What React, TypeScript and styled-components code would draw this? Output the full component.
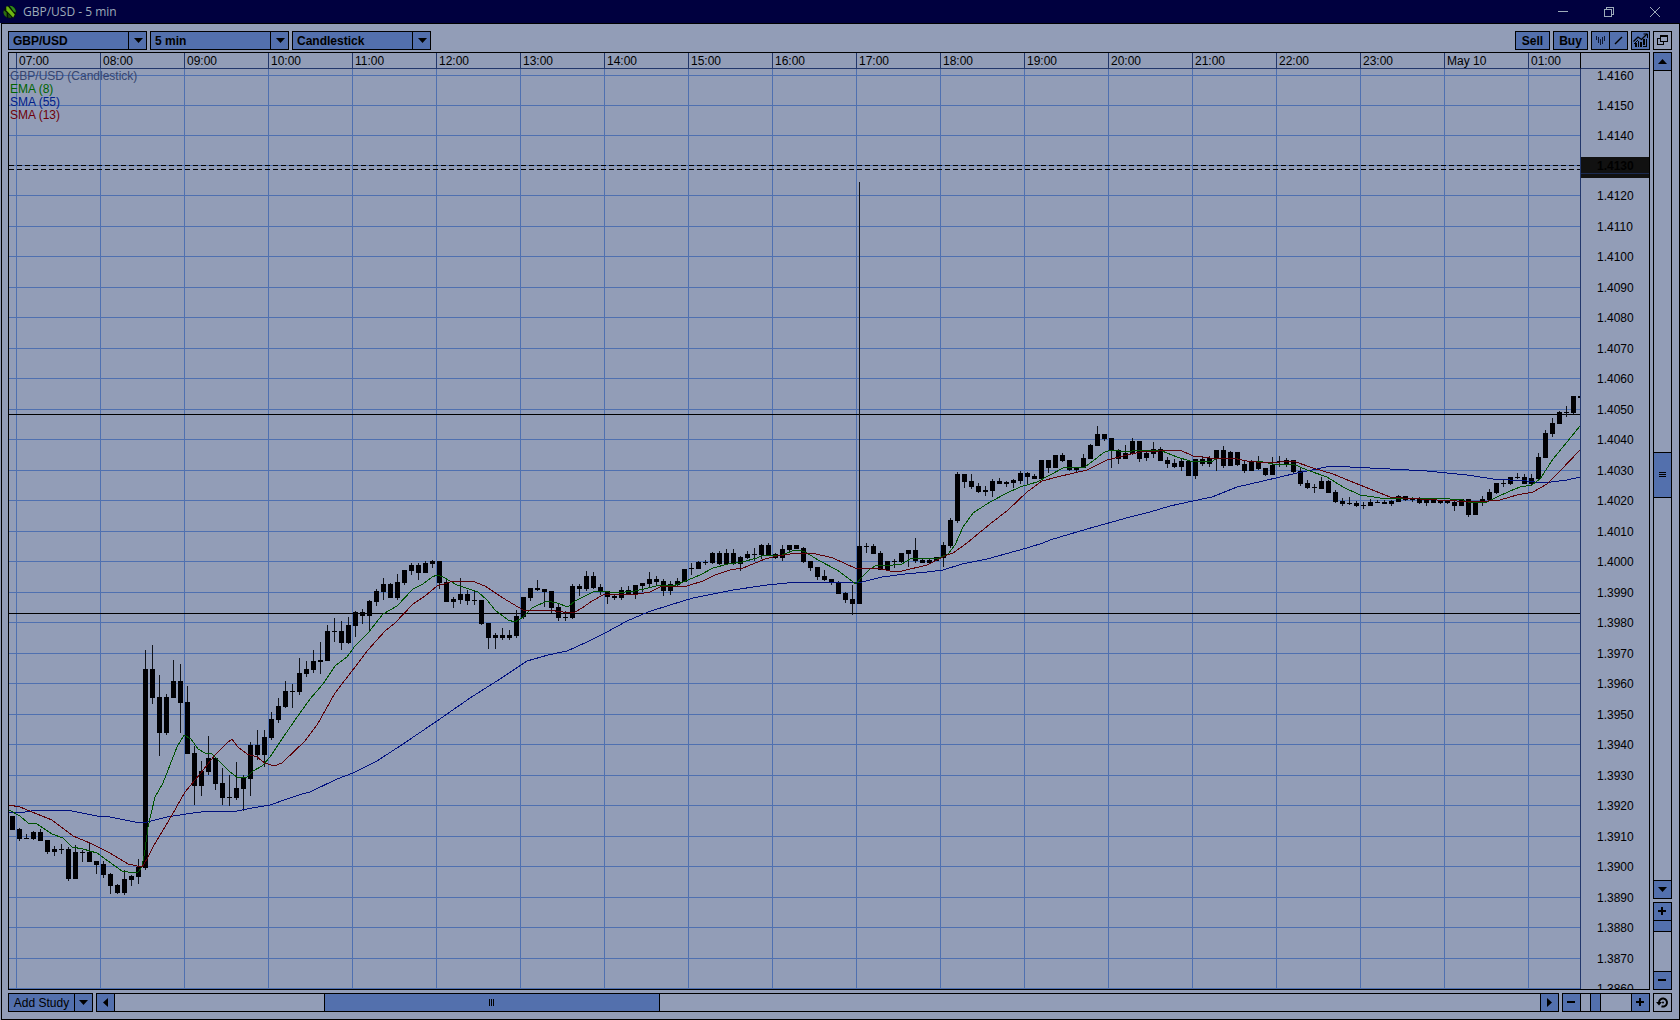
import React from "react";
import styled, { createGlobalStyle, css } from "styled-components";

const color = {
  panel: "#929db7",
  button: "#5370ad",
  grid: "#4f70b0",
  rule: "#22376b",
  title: "#00003f",
  titleText: "#9dabb9",
  ink: "#000000",
  body: "#000003",
  wick: "#10131a",
  ema: "#005200",
  smaSlow: "#00107f",
  smaFast: "#5c0005",
};

const GlobalStyle = createGlobalStyle`
  * { box-sizing: border-box; }
  body { margin: 0; background: ${color.panel}; }
  button, select, input { margin: 0; padding: 0; border: 0; border-radius: 0; font: inherit; color: inherit; }
`;

/* ---------- window ---------- */

const Frame = styled.div`
  display: flex;
  flex-direction: column;
  height: 100vh;
  min-height: 480px;
  background: ${color.panel};
  color: ${color.ink};
  font: 12px/14px "Liberation Sans", Arial, sans-serif;
`;

const TitleBar = styled.header`
  display: flex;
  align-items: center;
  flex: none;
  height: 23px;
  padding: 0 2px 0 3px;
  background: ${color.title};
  color: ${color.titleText};
`;

const Title = styled.h1`
  flex: 1;
  margin: 0 0 0 6px;
  font: 400 12px/16px "Open Sans", "Noto Sans", sans-serif;
`;

const WindowButton = styled.button`
  display: grid;
  place-items: center;
  width: 46px;
  height: 20px;
  background: transparent;
`;

const Workspace = styled.main`
  display: flex;
  flex-direction: column;
  flex: 1;
  min-height: 0;
  margin-left: 1px;
  padding: 7px 7px 7px 6px;
  border: 1px solid ${color.ink};
`;

const Toolbar = styled.div`
  display: flex;
  gap: 3px;
  flex: none;
  height: 19px;
  margin-bottom: 2px;
`;

const Spacer = styled.div`
  flex: 1;
`;

/* ---------- controls ---------- */

const boxed = css`
  border: 1px solid ${color.ink};
  background: ${color.button};
`;

const Picker = styled.label`
  display: grid;
  grid-template-columns: 1fr 18px;
  width: 139px;
  ${boxed}
  font-weight: 700;

  select {
    grid-area: 1 / 1 / 2 / 3;
    appearance: none;
    padding: 0 22px 0 4px;
    background: transparent;
    outline: none;
  }
`;

const PickerArrow = styled.span`
  grid-area: 1 / 2 / 2 / 3;
  display: grid;
  place-items: center;
  padding-left: 2px;
  border-left: 1px solid ${color.ink};
  pointer-events: none;
`;

const Button = styled.button<{ $width: number; $plain?: boolean }>`
  display: grid;
  place-items: center;
  flex: none;
  width: ${(p) => p.$width}px;
  height: 19px;
  ${boxed}
  ${(p) => p.$plain && `background: ${color.panel};`}
  font-weight: 700;
`;

const ButtonGroup = styled.div`
  display: flex;
  flex: none;

  button + button {
    margin-left: -1px;
  }
`;

const AddStudy = styled(Button)`
  font-weight: 400;
`;

/* ---------- scroll bars and zoom sliders ---------- */

const Bar = styled.div<{ $vertical?: boolean; $length?: number }>`
  display: flex;
  flex-direction: ${(p) => (p.$vertical ? "column" : "row")};
  flex: ${(p) => (p.$length ? `0 0 ${p.$length}px` : "1 1 0")};
  min-width: 0;
  min-height: 0;
  border: 1px solid ${color.ink};
`;

const BarButton = styled.button<{ $vertical?: boolean; $end?: boolean }>`
  display: grid;
  place-items: center;
  flex: 0 0 18px;
  background: ${color.button};
  border: 0 solid ${color.ink};
  ${(p) =>
    p.$vertical
      ? p.$end ? "border-top-width: 1px;" : "border-bottom-width: 1px;"
      : p.$end ? "border-left-width: 1px;" : "border-right-width: 1px;"}
`;

const Track = styled.div<{ $vertical?: boolean; $parts: string }>`
  display: grid;
  flex: 1;
  grid-template-${(p) => (p.$vertical ? "rows" : "columns")}: ${(p) => p.$parts};
`;

const Thumb = styled.div<{ $vertical?: boolean }>`
  display: grid;
  place-items: center;
  grid-area: ${(p) => (p.$vertical ? "2 / 1" : "1 / 2")};
  background: ${color.button};
  border: 0 solid ${color.ink};
  border-width: ${(p) => (p.$vertical ? "1px 0" : "0 1px")};
`;

const ZoomRange = styled.input<{ $vertical?: boolean }>`
  appearance: none;
  flex: 1;
  min-width: 0;
  min-height: 0;
  width: ${(p) => (p.$vertical ? "17px" : "50px")};
  height: ${(p) => (p.$vertical ? "50px" : "17px")};
  background: transparent;
  outline: none;
  ${(p) => p.$vertical && "writing-mode: vertical-lr;"}

  &::-webkit-slider-thumb {
    appearance: none;
    width: ${(p) => (p.$vertical ? "17px" : "11px")};
    height: ${(p) => (p.$vertical ? "11px" : "17px")};
    background: ${color.button};
    border: 0 solid ${color.ink};
    border-width: ${(p) => (p.$vertical ? "0 0 1px" : "0 1px")};
  }
`;

/* ---------- chart layout ---------- */

const Main = styled.div`
  display: flex;
  gap: 3px;
  flex: 1;
  min-height: 0;
  margin-bottom: 3px;
`;

const Side = styled.div`
  display: flex;
  flex-direction: column;
  gap: 3px;
  width: 19px;
`;

const Chart = styled.section`
  display: grid;
  grid-template: 16px 1fr / 1fr 69px;
  flex: 1;
  min-width: 0;
  border: 1px solid ${color.ink};
`;

const TimeAxis = styled.div`
  display: flex;
  padding-left: 7px;
  overflow: hidden;
  border-bottom: 1px solid ${color.rule};
`;

const TimeCell = styled.span`
  flex: 0 0 84px;
  padding-left: 2px;
  border-left: 1px solid ${color.rule};
  line-height: 16px;
`;

const AxisCorner = styled.div`
  border-left: 1px solid ${color.ink};
  border-bottom: 1px solid ${color.rule};
`;

const Plot = styled.div`
  display: grid;
  min-width: 0;
  min-height: 0;
  overflow: hidden;

  > * {
    grid-area: 1 / 1;
  }
`;

const Drawing = styled.svg`
  display: block;
  width: 100%;
  height: 100%;
  min-height: 0;
  contain: size;
  overflow: hidden;
`;

const Legend = styled.ul`
  margin: 0;
  padding: 1px 0 0 1px;
  list-style: none;
  line-height: 13px;
`;

const LegendItem = styled.li<{ $color: string }>`
  color: ${(p) => p.$color};
`;

const PriceAxis = styled.div`
  display: grid;
  min-height: 0;
  border-left: 1px solid ${color.rule};
  overflow: hidden;
`;

const Footer = styled.div`
  display: flex;
  gap: 3px;
  flex: none;
  height: 19px;
`;

/* ---------- chart data ---------- */

const hours = [
  ...Array.from({ length: 17 }, (_, i) => `${String(i + 7).padStart(2, "0")}:00`),
  "May 10",
  "01:00",
];

const PLOT_LEFT = 9;
const PLOT_TOP = 69;
const HOUR_STEP = 84;
const BAR_STEP = 7;

const priceLines = [
  75, 105, 135, 165, 195, 226, 256, 287, 317, 348, 378, 409, 439, 470, 500, 531,
  561, 592, 622, 653, 683, 714, 744, 775, 805, 836, 866, 897, 927, 958, 988,
];

type BarTuple = [number, number, number, number];

// Each bar is [high, body top, body bottom, low], in thirds of a pixel below the base.
const segments: { base: number; bars: BarTuple[] }[] = [
  {
    base: 620,
    bars: [
      [588, 588, 629, 629], [624, 627, 657, 662], [642, 655, 657, 657], [633, 636, 657, 659], [627, 636, 662, 662],
      [659, 660, 696, 701], [678, 686, 696, 708], [672, 687, 690, 702], [681, 687, 777, 782], [675, 696, 777, 777],
      [689, 696, 699, 726], [667, 696, 726, 726], [723, 723, 735, 762], [723, 732, 765, 773], [759, 762, 798, 822],
      [792, 795, 819, 822], [750, 777, 819, 824], [765, 768, 780, 798], [717, 741, 771, 792], [90, 147, 744, 749],
      [75, 147, 234, 251], [165, 231, 339, 408], [222, 231, 339, 345], [120, 183, 234, 234], [132, 183, 249, 339],
      [198, 246, 402, 402], [378, 399, 498, 555], [423, 453, 498, 528], [348, 414, 456, 465], [414, 414, 492, 510],
      [444, 489, 534, 555], [465, 531, 534, 558], [426, 504, 534, 540], [465, 474, 507, 573], [366, 375, 477, 528],
      [330, 375, 405, 420], [330, 351, 405, 441], [276, 297, 354, 360], [234, 258, 300, 308], [183, 213, 261, 264],
      [192, 213, 216, 264], [114, 159, 216, 225],
    ],
  },
  {
    base: 520,
    bars: [
      [423, 447, 462, 471], [390, 423, 450, 458], [366, 420, 425, 462], [315, 333, 423, 423], [294, 333, 336, 366],
      [303, 333, 369, 390], [291, 315, 369, 372], [273, 276, 318, 350], [267, 276, 288, 312], [240, 243, 288, 333],
      [207, 213, 246, 258], [174, 192, 216, 240], [189, 192, 234, 234], [162, 186, 234, 239], [150, 150, 189, 194],
      [129, 135, 153, 165], [130, 135, 159, 180], [123, 129, 159, 159], [120, 123, 132, 144], [123, 123, 189, 207],
      [180, 186, 246, 246], [231, 237, 246, 264], [174, 222, 240, 252], [210, 222, 243, 255], [213, 240, 243, 255],
      [240, 240, 312, 315], [309, 309, 354, 387], [339, 345, 354, 387], [324, 345, 354, 360], [330, 345, 354, 360],
      [270, 288, 348, 354], [231, 231, 291, 297], [204, 204, 234, 243], [180, 204, 210, 213], [207, 207, 216, 261],
      [213, 213, 264, 279], [249, 261, 294, 303], [273, 291, 294, 303], [192, 198, 294, 297],
    ],
  },
  {
    base: 500,
    bars: [
      [252, 258, 267, 288], [213, 228, 267, 273], [216, 228, 264, 267], [252, 261, 276, 285], [273, 273, 291, 312],
      [282, 288, 294, 300], [261, 270, 294, 300], [258, 270, 282, 285], [255, 255, 282, 297], [249, 249, 259, 276],
      [216, 237, 252, 264], [228, 237, 246, 258], [237, 243, 273, 288], [243, 252, 273, 285], [234, 243, 255, 258],
      [207, 207, 246, 246], [189, 204, 208, 225], [183, 186, 207, 207], [180, 186, 189, 195], [156, 159, 189, 192],
      [153, 159, 192, 195], [147, 159, 192, 192], [147, 159, 192, 195], [168, 171, 192, 213], [153, 162, 174, 177],
      [144, 162, 165, 183], [132, 135, 165, 177], [129, 135, 165, 165], [159, 162, 174, 177], [135, 147, 174, 183],
      [135, 135, 150, 153], [135, 135, 147, 147], [141, 144, 186, 189], [183, 183, 204, 213], [201, 201, 231, 240],
      [210, 228, 240, 243], [237, 237, 249, 255], [243, 246, 282, 282], [276, 279, 300, 309], [255, 297, 312, 345],
      [-954, 138, 312, 312], [129, 138, 141, 159], [132, 138, 162, 162],
    ],
  },
  {
    base: 440,
    bars: [
      [333, 339, 390, 390], [363, 363, 390, 390], [357, 363, 366, 384], [339, 339, 366, 369], [330, 330, 342, 381],
      [294, 330, 363, 369], [357, 360, 369, 369], [357, 360, 369, 370], [350, 351, 363, 363], [306, 315, 354, 381],
      [234, 240, 318, 324], [96, 102, 243, 249], [102, 102, 126, 144], [102, 123, 141, 147], [129, 138, 156, 159],
      [138, 150, 155, 168], [117, 123, 153, 171], [114, 123, 132, 132], [123, 126, 131, 141], [117, 120, 129, 144],
      [93, 99, 123, 132], [96, 99, 111, 135], [102, 108, 117, 117], [60, 60, 117, 120], [60, 60, 84, 99],
      [45, 45, 84, 84], [39, 45, 63, 67], [60, 60, 90, 93], [81, 81, 90, 96], [42, 54, 84, 84], [12, 15, 57, 57],
    ],
  },
  {
    base: 400,
    bars: [
      [78, 102, 138, 138], [101, 102, 117, 123], [114, 114, 153, 204], [147, 150, 177, 192], [135, 159, 177, 177],
      [114, 123, 162, 165], [123, 123, 177, 186], [153, 159, 174, 183], [126, 147, 162, 174], [141, 147, 183, 183],
      [171, 180, 192, 204], [177, 189, 201, 204], [174, 183, 201, 213], [180, 183, 228, 228], [177, 177, 228, 237],
      [168, 177, 192, 198], [168, 174, 192, 201], [150, 150, 174, 213], [138, 150, 198, 204], [153, 156, 198, 198],
      [156, 156, 195, 198], [180, 192, 213, 219], [180, 183, 213, 213], [168, 183, 207, 210], [204, 204, 225, 228],
      [171, 195, 225, 225], [168, 183, 186, 201], [174, 180, 192, 201], [180, 180, 216, 222], [204, 213, 252, 258],
      [240, 249, 264, 267], [252, 261, 265, 279], [231, 243, 267, 267], [240, 243, 279, 279], [270, 276, 306, 309],
      [294, 303, 312, 318], [291, 309, 311, 315], [303, 309, 318, 321], [306, 315, 318, 327], [297, 306, 318, 318],
      [300, 306, 308, 309], [300, 306, 312, 312], [300, 303, 312, 318], [285, 288, 306, 306], [288, 288, 300, 303],
    ],
  },
  {
    base: 380,
    bars: [
      [351, 357, 360, 366], [351, 354, 369, 371], [357, 360, 369, 378], [360, 360, 369, 370], [360, 360, 369, 371],
      [360, 360, 369, 371], [363, 366, 378, 393], [357, 357, 378, 378], [357, 357, 405, 411], [366, 366, 405, 405],
      [348, 357, 363, 378], [327, 336, 360, 363], [309, 309, 339, 342], [300, 309, 312, 321], [291, 291, 312, 315],
      [279, 291, 294, 297], [282, 291, 312, 312], [282, 294, 312, 315], [219, 231, 297, 300], [150, 159, 234, 234],
      [114, 129, 162, 171], [93, 96, 132, 132], [78, 96, 99, 111], [48, 48, 99, 102], [48, 48, 54, 54],
    ],
  },
];

const candles = segments.flatMap(({ base, bars }) =>
  bars.map((bar) => bar.map((v) => base + Math.round(v / 3)) as BarTuple)
);

const ema8 =
  "9,810 20,816 28,823 37,824 52,834 63,838 72,847 83,849 97,853 108,861 122,871 128,872 138,872 142,867 145,850 148,827 155,797 163,783 177,747 184,735 191,739 198,749 205,753 212,754 220,762 230,772 237,777 247,777 253,771 262,766 270,757 280,742 295,720 310,699 323,684 335,666 347,657 355,646 368,633 383,614 397,606 413,589 423,584 432,577 437,575 443,577 457,585 478,592 487,600 495,610 508,620 515,622 523,617 532,608 547,601 557,603 568,607 575,601 583,597 593,592 603,591 615,593 635,591 648,588 660,585 673,586 688,580 700,575 713,568 728,564 742,562 757,558 764,555 782,555 792,551 800,550 807,553 818,560 837,570 856,584 862,577 870,569 877,565 885,566 902,564 910,559 920,558 937,559 948,554 955,545 963,527 973,513 990,502 1007,493 1020,487 1037,482 1048,476 1065,467 1085,467 1093,461 1103,453 1110,450 1127,452 1137,450 1162,451 1177,457 1190,461 1213,461 1217,458 1233,458 1247,461 1258,461 1273,464 1293,464 1307,470 1327,477 1343,487 1360,495 1387,499 1412,498 1450,499 1463,500 1470,503 1487,502 1497,497 1510,491 1520,487 1532,485 1540,479 1553,459 1567,442 1580,426";

const sma13 =
  "9,805 20,807 37,814 52,820 73,836 90,843 110,853 128,864 142,867 147,859 153,847 172,815 185,792 200,774 215,755 227,743 232,739 238,747 247,754 257,757 265,763 274,766 282,763 305,741 317,725 335,693 352,671 368,650 385,631 395,623 413,604 425,596 437,586 447,583 453,581 472,581 485,586 503,598 523,610 538,611 548,610 563,612 575,612 582,608 592,601 603,595 620,594 638,594 650,592 660,587 687,586 703,581 715,575 730,570 743,568 765,559 777,556 797,553 812,553 833,558 857,569 877,568 890,571 902,571 927,565 947,555 953,553 967,543 990,524 1008,510 1027,492 1042,481 1057,477 1087,470 1107,460 1127,455 1140,452 1159,451 1180,450 1193,456 1210,458 1237,459 1247,461 1267,463 1293,461 1313,468 1333,474 1350,481 1370,489 1390,497 1403,498 1437,500 1477,502 1500,500 1517,495 1533,492 1547,484 1560,471 1580,450";

const sma55 =
  "9,813 25,812 37,810 67,810 97,816 110,817 140,823 147,822 167,817 193,813 210,811 237,811 252,808 270,805 287,799 302,794 310,792 337,779 353,773 377,761 403,744 437,721 470,698 500,679 527,661 548,655 567,651 587,642 605,633 627,621 648,612 670,605 693,598 733,590 767,585 787,583 807,582 862,582 882,577 905,574 927,572 943,570 962,564 987,559 1027,548 1043,543 1050,540 1087,529 1130,517 1150,512 1170,506 1193,501 1212,497 1237,487 1263,481 1297,473 1317,469 1330,466 1350,467 1390,469 1427,471 1467,475 1493,479 1527,481 1543,483 1567,480 1580,477";

/* ---------- icons ---------- */

type Direction = "up" | "down" | "left" | "right";

const arrowShapes: Record<Direction, [number, number, string]> = {
  down: [9, 5, "M0 0h9L4.5 5z"],
  up: [9, 5, "M0 5h9L4.5 0z"],
  left: [5, 9, "M5 0v9L0 4.5z"],
  right: [5, 9, "M0 0v9L5 4.5z"],
};

function Arrow({ to }: { to: Direction }) {
  const [w, h, d] = arrowShapes[to];
  return (
    <svg width={w} height={h} aria-hidden="true">
      <path d={d} />
    </svg>
  );
}

function Sign({ plus }: { plus?: boolean }) {
  return (
    <svg width="9" height="9" aria-hidden="true" shapeRendering="crispEdges">
      <path d={plus ? "M0 3h8v2H0zM3 0h2v8H3z" : "M0 3h8v2H0z"} />
    </svg>
  );
}

function Grip({ vertical }: { vertical?: boolean }) {
  return (
    <svg
      width={vertical ? 7 : 6}
      height={vertical ? 6 : 7}
      aria-hidden="true"
      shapeRendering="crispEdges"
    >
      <path d={vertical ? "M0 0h7v1H0zM0 2h7v1H0zM0 4h7v1H0z" : "M0 0h1v7H0zM2 0h1v7H2zM4 0h1v7H4z"} />
    </svg>
  );
}

function Logo() {
  return (
    <svg width="14" height="14" viewBox="0 0 14 14" aria-hidden="true">
      <circle cx="7" cy="7" r="6.5" fill="#061206" />
      <path d="M3.2 1.6 5 1.4 11.8 9.6 10.2 12.4 3.4 5.4z" fill="#6fb512" />
      <path d="M6.6.8a6 6 0 0 1 6.2 6.6L10.6 6.6z" fill="#2f8a1c" />
      <path d="M.9 5.2 3.6 7.4v5A6 6 0 0 1 .9 5.2z" fill="#2b6d10" />
      <path d="M5.2 8.4 8.6 12 7.4 13 5.2 12.6z" fill="#174a0c" />
    </svg>
  );
}

/* ---------- parts ---------- */

function Select({ label, options }: { label: string; options: string[] }) {
  return (
    <Picker>
      <select aria-label={label}>
        {options.map((o) => (
          <option key={o}>{o}</option>
        ))}
      </select>
      <PickerArrow>
        <Arrow to="down" />
      </PickerArrow>
    </Picker>
  );
}

function PricePlot() {
  return (
    <Drawing shapeRendering="crispEdges" role="img" aria-label="GBP/USD five minute candles">
      {priceLines.map((y) => (
        <rect key={y} y={y - PLOT_TOP} width="100%" height="1" fill={color.grid} />
      ))}
      {hours.map((h, i) => (
        <rect key={h} x={7 + i * HOUR_STEP} width="1" height="100%" fill={color.grid} />
      ))}
      <rect y={414 - PLOT_TOP} width="100%" height="1" />
      <rect y={613 - PLOT_TOP} width="100%" height="1" />
      {[165, 169].map((y) => (
        <line
          key={y}
          x2="100%"
          y1={y - PLOT_TOP + 0.5}
          y2={y - PLOT_TOP + 0.5}
          stroke={color.ink}
          strokeDasharray="5 3"
        />
      ))}
      <g transform={`translate(${-PLOT_LEFT} ${-PLOT_TOP})`}>
        {candles.map(([high, top, bottom, low], i) => {
          const x = 12 + i * BAR_STEP;
          return (
            <g key={i}>
              <rect x={x} y={high} width="1" height={Math.max(low - high, 1)} fill={color.wick} />
              <rect x={x - 2} y={top} width="5" height={Math.max(bottom - top, 1)} fill={color.body} />
            </g>
          );
        })}
        <g fill="none" strokeWidth="1">
          <polyline points={sma55} stroke={color.smaSlow} />
          <polyline points={ema8} stroke={color.ema} />
          <polyline points={sma13} stroke={color.smaFast} />
        </g>
      </g>
    </Drawing>
  );
}

function PriceScale() {
  return (
    <Drawing fontSize="12">
      <rect y={157 - PLOT_TOP} width="100%" height="21" fill="#111111" />
      <rect y={173 - PLOT_TOP} width="100%" height="1" fill="#1b2a50" />
      {priceLines.map((y, i) => (
        <text key={y} x="16" y={y - PLOT_TOP + 5} fontWeight={i === 3 ? 700 : 400}>
          {((14160 - i * 10) / 10000).toFixed(4)}
        </text>
      ))}
    </Drawing>
  );
}

export default function App() {
  return (
    <Frame>
      <GlobalStyle />
      <TitleBar>
        <Logo />
        <Title>GBP/USD - 5 min</Title>
        <WindowButton aria-label="Minimize">
          <svg width="10" height="10" shapeRendering="crispEdges">
            <path d="M0 4h10v1H0z" fill={color.titleText} />
          </svg>
        </WindowButton>
        <WindowButton aria-label="Restore">
          <svg width="10" height="10" fill="none" stroke={color.titleText} shapeRendering="crispEdges">
            <path d="M.5 2.5h7v7h-7zM2.5 2.5v-2h7v7h-2" />
          </svg>
        </WindowButton>
        <WindowButton aria-label="Close">
          <svg width="10" height="10" fill="none" stroke={color.titleText}>
            <path d="M0 0 10 10M10 0 0 10" />
          </svg>
        </WindowButton>
      </TitleBar>

      <Workspace>
        <Toolbar>
          <Select label="Instrument" options={["GBP/USD"]} />
          <Select label="Interval" options={["5 min"]} />
          <Select label="Chart type" options={["Candlestick"]} />
          <Spacer />
          <Button $width={35}>Sell</Button>
          <Button $width={35}>Buy</Button>
          <ButtonGroup>
            <Button $width={19} aria-label="Bar style">
              <svg width="9" height="11" shapeRendering="crispEdges">
                <path
                  d="M0 1h1v4H0zM2 2h1v6H2zM4 4h1v6H4zM6 2h1v7H6zM8 1h1v5H8z"
                  fill="#0b1530"
                />
              </svg>
            </Button>
            <Button $width={19} aria-label="Draw line">
              <svg width="9" height="9" fill="none" stroke={color.ink} strokeWidth="1.5">
                <path d="M1 8 8 1" />
              </svg>
            </Button>
          </ButtonGroup>
          <Button $width={19} aria-label="Indicators">
            <svg width="15" height="15" viewBox="0 0 15 15">
              <path d="M.5 8.5 5 4 8.5 6.5 14 1" fill="none" stroke={color.ink} strokeWidth="1.3" />
              <path d="M10.5 1h4v4" fill="none" stroke={color.ink} />
              <path d="M1 11 5 7" fill="none" stroke={color.ink} />
              <path d="M2 10h2v4H2zM5 8h1v6H5zM7 9h2v5H7zM10 6h2v6h-2zM13 6h1v8h-1zM10 13h4v1h-4z" />
            </svg>
          </Button>
          <Button $width={19} $plain aria-label="Detach chart">
            <svg width="11" height="11" fill="none" stroke={color.ink} shapeRendering="crispEdges">
              <path d="M3.5.5h7v6h-7zM3.5 3.5h-3v6h6v-3" />
              <path d="M3 1.5h8" />
            </svg>
          </Button>
        </Toolbar>

        <Main>
          <Chart>
            <TimeAxis>
              {hours.map((h) => (
                <TimeCell key={h}>{h}</TimeCell>
              ))}
            </TimeAxis>
            <AxisCorner />
            <Plot>
              <PricePlot />
              <Legend>
                <LegendItem $color="#36456f">GBP/USD (Candlestick)</LegendItem>
                <LegendItem $color="#006400">EMA (8)</LegendItem>
                <LegendItem $color="#00208a">SMA (55)</LegendItem>
                <LegendItem $color="#6e0008">SMA (13)</LegendItem>
              </Legend>
            </Plot>
            <PriceAxis>
              <PriceScale />
            </PriceAxis>
          </Chart>
          <Side>
            <Bar $vertical>
              <BarButton $vertical aria-label="Scroll up">
                <Arrow to="up" />
              </BarButton>
              <Track $vertical $parts="381fr 46fr 382fr">
                <Thumb $vertical>
                  <Grip vertical />
                </Thumb>
              </Track>
              <BarButton $vertical $end aria-label="Scroll down">
                <Arrow to="down" />
              </BarButton>
            </Bar>
            <Bar $vertical $length={88}>
              <BarButton $vertical aria-label="Zoom price in">
                <Sign plus />
              </BarButton>
              <ZoomRange $vertical type="range" min="0" max="39" defaultValue="0" aria-label="Price zoom" />
              <BarButton $vertical $end aria-label="Zoom price out">
                <Sign />
              </BarButton>
            </Bar>
          </Side>
        </Main>

        <Footer>
          <ButtonGroup>
            <AddStudy $width={67}>Add Study</AddStudy>
            <AddStudy $width={19} aria-label="Study list">
              <Arrow to="down" />
            </AddStudy>
          </ButtonGroup>
          <Bar>
            <BarButton aria-label="Scroll left">
              <Arrow to="left" />
            </BarButton>
            <Track $parts="209fr 336fr 880fr">
              <Thumb>
                <Grip />
              </Thumb>
            </Track>
            <BarButton $end aria-label="Scroll right">
              <Arrow to="right" />
            </BarButton>
          </Bar>
          <Bar $length={88}>
            <BarButton aria-label="Zoom time out">
              <Sign />
            </BarButton>
            <ZoomRange type="range" min="0" max="39" defaultValue="9" aria-label="Time zoom" />
            <BarButton $end aria-label="Zoom time in">
              <Sign plus />
            </BarButton>
          </Bar>
          <Button $width={19} $plain aria-label="Reset view">
            <svg width="13" height="11" viewBox="0 0 13 11" fill="none" stroke={color.ink} strokeWidth="2">
              <path d="M3 5.5A4 4 0 1 1 5.5 9.2" />
              <path d="M0 5h6L3 8.5z" fill={color.ink} stroke="none" />
              <circle cx="7" cy="5.5" r="1" fill={color.ink} stroke="none" />
            </svg>
          </Button>
        </Footer>
      </Workspace>
    </Frame>
  );
}
